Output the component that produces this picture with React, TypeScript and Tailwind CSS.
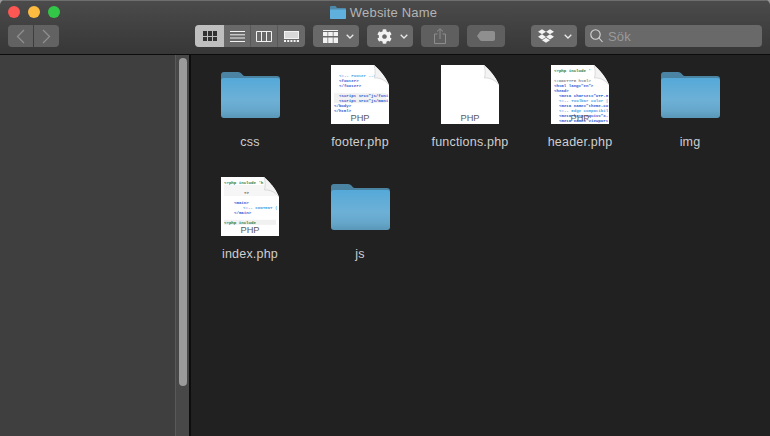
import React from "react";
import { FaCog, FaDropbox } from "react-icons/fa";

type CodeLine = { x: number; y: number; t: string; c: string; bg?: boolean };

const blue = "#2f55d4";
const light = "#4aa3e6";
const green = "#1f7a3a";

const footerLines: CodeLine[] = [
  { x: 8, y: 12, t: "<!-- Footer -->", c: light },
  { x: 8, y: 17, t: "<footer>", c: blue },
  { x: 8, y: 22, t: "</footer>", c: blue },
  { x: 8, y: 32, t: "<script src=\"js/funi", c: blue, bg: true },
  { x: 8, y: 37, t: "<script src=\"js/mani", c: blue, bg: true },
  { x: 3, y: 42, t: "</body>", c: blue },
  { x: 3, y: 47, t: "</html>", c: blue },
];

const headerLines: CodeLine[] = [
  { x: 3, y: 6.6, t: "<?php include '", c: green },
  { x: 3, y: 16.6, t: "<!DOCTYPE html>", c: "#8a8a8a" },
  { x: 3, y: 21.6, t: "<html lang=\"en\">", c: blue },
  { x: 3, y: 26.6, t: "<head>", c: blue },
  { x: 8, y: 31.6, t: "<meta charset=\"UTF-8", c: blue },
  { x: 8, y: 36.6, t: "<!-- Toolbar color |", c: light },
  { x: 8, y: 41.6, t: "<meta name=\"theme-co", c: blue },
  { x: 8, y: 46.6, t: "<!-- Edge compatibil", c: light },
  { x: 8, y: 51.6, t: "<meta http-equiv=\"X-", c: blue },
  { x: 8, y: 56.6, t: "<meta name=\"viewport", c: blue },
];

const indexLines: CodeLine[] = [
  { x: 3, y: 6.6, t: "<?php include 'h", c: green },
  { x: 23, y: 16.6, t: "?>", c: "#444444" },
  { x: 13, y: 26.6, t: "<main>", c: blue },
  { x: 22, y: 31.6, t: "<!-- CONTENT (", c: light },
  { x: 13, y: 36.6, t: "</main>", c: blue },
  { x: 3, y: 46.6, t: "<?php include", c: green, bg: true },
];

function FileIcon({ lines, band }: { lines: CodeLine[]; band?: boolean }) {
  return (
    <svg width="58" height="59" viewBox="0 0 58 59">
      <path d="M0 0H43C48 4 55 12 58 20V59H0Z" fill="#ffffff" />
      {band ? <rect x="3" y="8" width="52" height="11" fill="#f6f6f6" /> : null}
      {lines.map((l) =>
        l.bg ? <rect key={"b" + l.y} x="3" y={l.y - 3.8} width="52" height="5" fill="#f1f1f1" /> : null
      )}
      <g opacity="0.99">
        {lines.map((l) => (
          <text
            key={l.y}
            x={l.x}
            y={l.y}
            fontFamily="'Liberation Mono', monospace"
            fontWeight="700"
            fontSize="4.1"
            fill={l.c}
          >
            {l.t}
          </text>
        ))}
      </g>
      <path d="M41 0H58V20C55 12 48 4 43 0Z" fill="#212121" />
      <path d="M43 0C44.500 5 44.500 9 43.500 13C48 12.500 54 14.500 58 20C55 12 48 4 43 0Z" fill="#f3f3f3" />
      <path d="M43 0C44.500 5 44.500 9 43.500 13C48 12.500 54 14.500 58 20" fill="none" stroke="#d6d6d6" strokeWidth="0.9" />
      <g opacity="0.99">
        <text
          x="29"
          y="56"
          textAnchor="middle"
          fontFamily="'Liberation Sans', sans-serif"
          fontSize="9.300"
          fill="#5a5a5a"
        >
          PHP
        </text>
      </g>
    </svg>
  );
}

function FolderIcon({ id }: { id: string }) {
  return (
    <svg width="59" height="47" viewBox="0 0 59 47">
      <defs>
        <linearGradient id={id} x1="0" y1="0" x2="0" y2="1">
          <stop offset="0" stopColor="#55a9d8" />
          <stop offset="0.55" stopColor="#6db0d6" />
          <stop offset="0.8" stopColor="#66a8cc" />
          <stop offset="1" stopColor="#5a97b8" />
        </linearGradient>
      </defs>
      <path
        d="M0 4C0 2 1 1 3 1H17C19 1 20 2 21 3.200C22 4.500 23 5 25 5H56C58 5 59 6 59 8V20H0Z"
        fill="#4b83a3"
      />
      <path
        d="M0 9.500C0 8 1 7 2.500 7H56.500C58 7 59 8 59 9.500V44C59 46 58 47 56 47H3C1 47 0 46 0 44Z"
        fill={`url(#${id})`}
      />
    </svg>
  );
}

const Chevron = () => (
  <svg width="8" height="5" viewBox="0 0 8 5" fill="none" stroke="#e8e8e8" strokeWidth="1.300">
    <path d="M.7 .7L4 4L7.300 .7" />
  </svg>
);

function Item({ label, children }: { label: string; children: React.ReactNode }) {
  return (
    <div className="flex h-[112px] flex-col items-center">
      <div className="flex h-[61px] items-center justify-center">{children}</div>
      <div className="mt-[9px] text-[12.500px] leading-[16px] tracking-[0.2px] text-[#cfcfcf]">{label}</div>
    </div>
  );
}

export default function App() {
  return (
    <div className="h-[436px] w-[770px] overflow-hidden bg-[#9a9a9a] [font-family:'Liberation_Sans',sans-serif]">
      <div className="flex h-full flex-col overflow-hidden rounded-t-[5px]">
        <header className="h-[55px] shrink-0 border-b border-[#0c0c0c] bg-gradient-to-b from-[#4b4b4b] to-[#373737] shadow-[inset_0_1px_0_#6e6e6e]">
          <div className="grid h-[24px] grid-cols-[1fr_auto_1fr] items-center pr-[3px]">
            <div className="flex gap-[8px] pl-[8px]">
              <span className="h-[12px] w-[12px] rounded-full bg-[#fc5753]" />
              <span className="h-[12px] w-[12px] rounded-full bg-[#fdbc40]" />
              <span className="h-[12px] w-[12px] rounded-full bg-[#33c748]" />
            </div>
            <div className="flex items-center gap-[4px] text-[13px] leading-none tracking-[0.2px] text-[#b4b4b4]">
              <svg width="16" height="13" viewBox="0 0 16 13">
                <path d="M0 1C0 .5 .5 0 1 0H5.500L7 2H15C15.600 2 16 2.400 16 3V6H0Z" fill="#4e88aa" />
                <path d="M0 3.500H16V12C16 12.600 15.600 13 15 13H1C.4 13 0 12.600 0 12Z" fill="#5fb0dc" />
              </svg>
              <span>Website Name</span>
            </div>
            <div />
          </div>

          <div className="mt-[1px] flex h-[22px] items-stretch pl-[8px]">
            <div className="flex w-[51px] gap-[1px]">
              <div className="flex flex-1 items-center justify-center rounded-l-[4px] bg-[#626262]">
                <svg width="9" height="15" viewBox="0 0 9 15" fill="none" stroke="#8f8f8f" strokeWidth="1.300">
                  <path d="M8 1L1.500 7.500L8 14" />
                </svg>
              </div>
              <div className="flex flex-1 items-center justify-center rounded-r-[4px] bg-[#626262]">
                <svg width="9" height="15" viewBox="0 0 9 15" fill="none" stroke="#8f8f8f" strokeWidth="1.300">
                  <path d="M1 1L7.500 7.500L1 14" />
                </svg>
              </div>
            </div>

            <div className="ml-[136px] flex w-[110px] overflow-hidden rounded-[4px] bg-[#696969]">
              <div className="flex w-[29px] items-center justify-center bg-[#bfbfbf]">
                <div className="grid grid-cols-3 gap-[1px]">
                  {[0, 1, 2, 3, 4, 5].map((i) => (
                    <span key={i} className="h-[4.500px] w-[4px] bg-[#333333]" />
                  ))}
                </div>
              </div>
              <div className="flex w-[27px] items-center justify-center border-r border-[#585858]">
                <svg width="15" height="11" viewBox="0 0 15 11" stroke="#f2f2f2" strokeWidth="1">
                  <path d="M0 .5H15M0 3.800H15M0 7H15M0 10.500H15" />
                </svg>
              </div>
              <div className="flex w-[27px] items-center justify-center border-r border-[#585858]">
                <svg width="16" height="11" viewBox="0 0 16 11" fill="none" stroke="#f2f2f2" strokeWidth="1">
                  <path d="M.5 .5H15.500V10.500H.5ZM5.500 .5V10.500M10.500 .5V10.500" />
                </svg>
              </div>
              <div className="flex w-[27px] items-center justify-center">
                <svg width="15" height="11" viewBox="0 0 15 11">
                  <rect x=".5" y=".5" width="14" height="7" fill="#d8d8d8" stroke="#f2f2f2" />
                  <path d="M0 10H2M3.200 10H5.200M6.400 10H8.400M9.600 10H11.600M12.800 10H15" stroke="#f2f2f2" strokeWidth="2" />
                </svg>
              </div>
            </div>

            <div className="ml-[8px] flex w-[46px] items-center justify-between rounded-[4px] bg-[#696969] pl-[10px] pr-[5px]">
              <svg width="15" height="13" viewBox="0 0 15 13" fill="#f2f2f2">
                <path d="M0 0H15V1H0ZM0 2H4.500V6H0ZM5.200 2H9.800V6H5.200ZM10.500 2H15V6H10.500ZM0 7.500H4.500V13H0ZM5.200 7.500H9.800V13H5.200ZM10.500 7.500H15V13H10.500Z" />
              </svg>
              <Chevron />
            </div>

            <div className="ml-[8px] flex w-[46px] items-center justify-between rounded-[4px] bg-[#696969] pl-[10px] pr-[5px]">
              <FaCog className="h-[15px] w-[15px] text-[#f2f2f2]" />
              <Chevron />
            </div>

            <div className="ml-[8px] flex w-[38px] items-center justify-center rounded-[4px] bg-[#5f5f5f]">
              <svg width="12" height="16" viewBox="0 0 12 16" fill="none" stroke="#8d8d8d" strokeWidth="1">
                <path d="M3.500 6H.5V15.500H11.500V6H8.500M6 11V.8M3 3.500L6 .8L9 3.500" />
              </svg>
            </div>

            <div className="ml-[8px] flex w-[38px] items-center justify-center rounded-[4px] bg-[#5f5f5f]">
              <svg width="18" height="10" viewBox="0 0 18 10">
                <path d="M5 0H16C17.200 0 18 .8 18 2V8C18 9.200 17.200 10 16 10H5C4 10 3.500 9.700 3 9.200L0 5L3 .8C3.500 .3 4 0 5 0Z" fill="#8f8f8f" />
              </svg>
            </div>

            <div className="ml-[26px] flex w-[46px] items-center justify-between rounded-[4px] bg-[#696969] pl-[7px] pr-[5px]">
              <FaDropbox className="h-[16px] w-[16px] text-[#f2f2f2]" />
              <Chevron />
            </div>

            <div className="ml-[8px] flex w-[177px] items-center gap-[5px] rounded-[4px] bg-[#696969] pl-[5px]">
              <svg width="13" height="14" viewBox="0 0 13 14" fill="none" stroke="#d6d6d6" strokeWidth="1.100">
                <circle cx="5.500" cy="5.500" r="4.700" />
                <path d="M9 9L12.500 13" />
              </svg>
              <span className="text-[13px] leading-none tracking-[0.2px] text-[#9a9a9a]">Sök</span>
            </div>
          </div>
        </header>

        <div className="flex min-h-0 flex-1">
          <aside className="w-[175px] shrink-0 bg-[#3f3f3f]" />
          <div className="w-[16px] shrink-0 border-l border-[#595959] border-r-2 border-r-[#0d0d0d] bg-[#484848] pl-[3px] pt-[3px]">
            <div className="h-[328px] w-[8px] rounded-full bg-[#9b9b9b]" />
          </div>
          <main className="flex-1 bg-[#212121] pl-[4px] pt-[9px]">
            <div className="grid w-[550px] grid-cols-5 text-center">
              <Item label="css"><FolderIcon id="f1" /></Item>
              <Item label="footer.php"><FileIcon lines={footerLines} /></Item>
              <Item label="functions.php"><FileIcon lines={[]} /></Item>
              <Item label="header.php"><FileIcon lines={headerLines} /></Item>
              <Item label="img"><FolderIcon id="f2" /></Item>
              <Item label="index.php"><FileIcon lines={indexLines} band /></Item>
              <Item label="js"><FolderIcon id="f3" /></Item>
            </div>
          </main>
        </div>
      </div>
    </div>
  );
}
